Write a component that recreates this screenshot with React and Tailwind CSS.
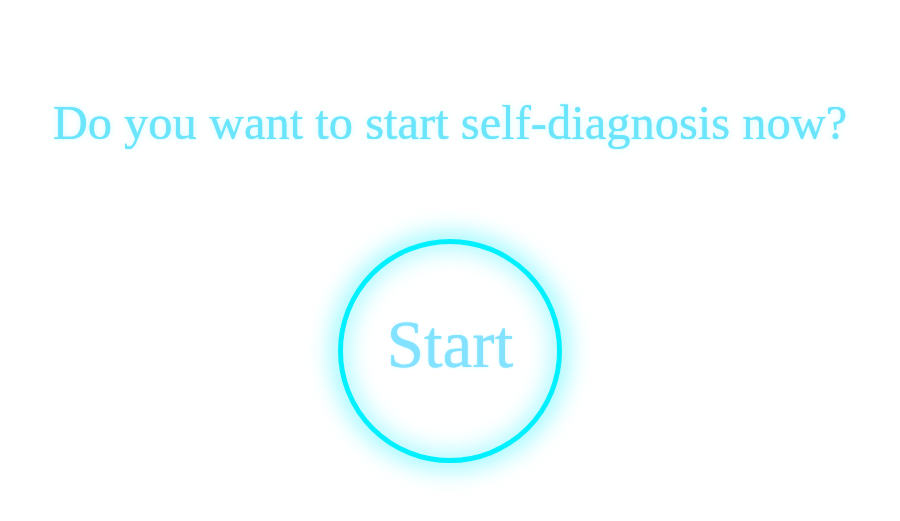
import React from "react";

const App = () => {
  return (
    <div className="w-[900px] h-[521px] bg-white flex flex-col items-center overflow-hidden" style={{ fontFamily: '"Liberation Serif", "DejaVu Serif", serif' }}>
      <h1 className="mt-[95px] text-[48.5px] leading-[56px] text-[#6ae5fc] font-normal [text-shadow:0_0_1px_#6ae5fc,0_0_6px_rgba(180,250,255,0.6)]">
        Do you want to start self-diagnosis now?
      </h1>

      <button className="mt-[88px] w-[224px] h-[224px] rounded-full border-[5px] border-[#00f0ff] bg-white flex items-center justify-center shadow-[0_0_22px_8px_rgba(0,240,255,0.35),inset_0_0_22px_6px_rgba(0,240,255,0.3)]">
        <span className="text-[67px] leading-none text-[#82e2ff] -mt-[14px] [text-shadow:0_0_1px_#82e2ff,0_0_4px_#e0faff]">
          Start
        </span>
      </button>
    </div>
  );
};

export default App;
